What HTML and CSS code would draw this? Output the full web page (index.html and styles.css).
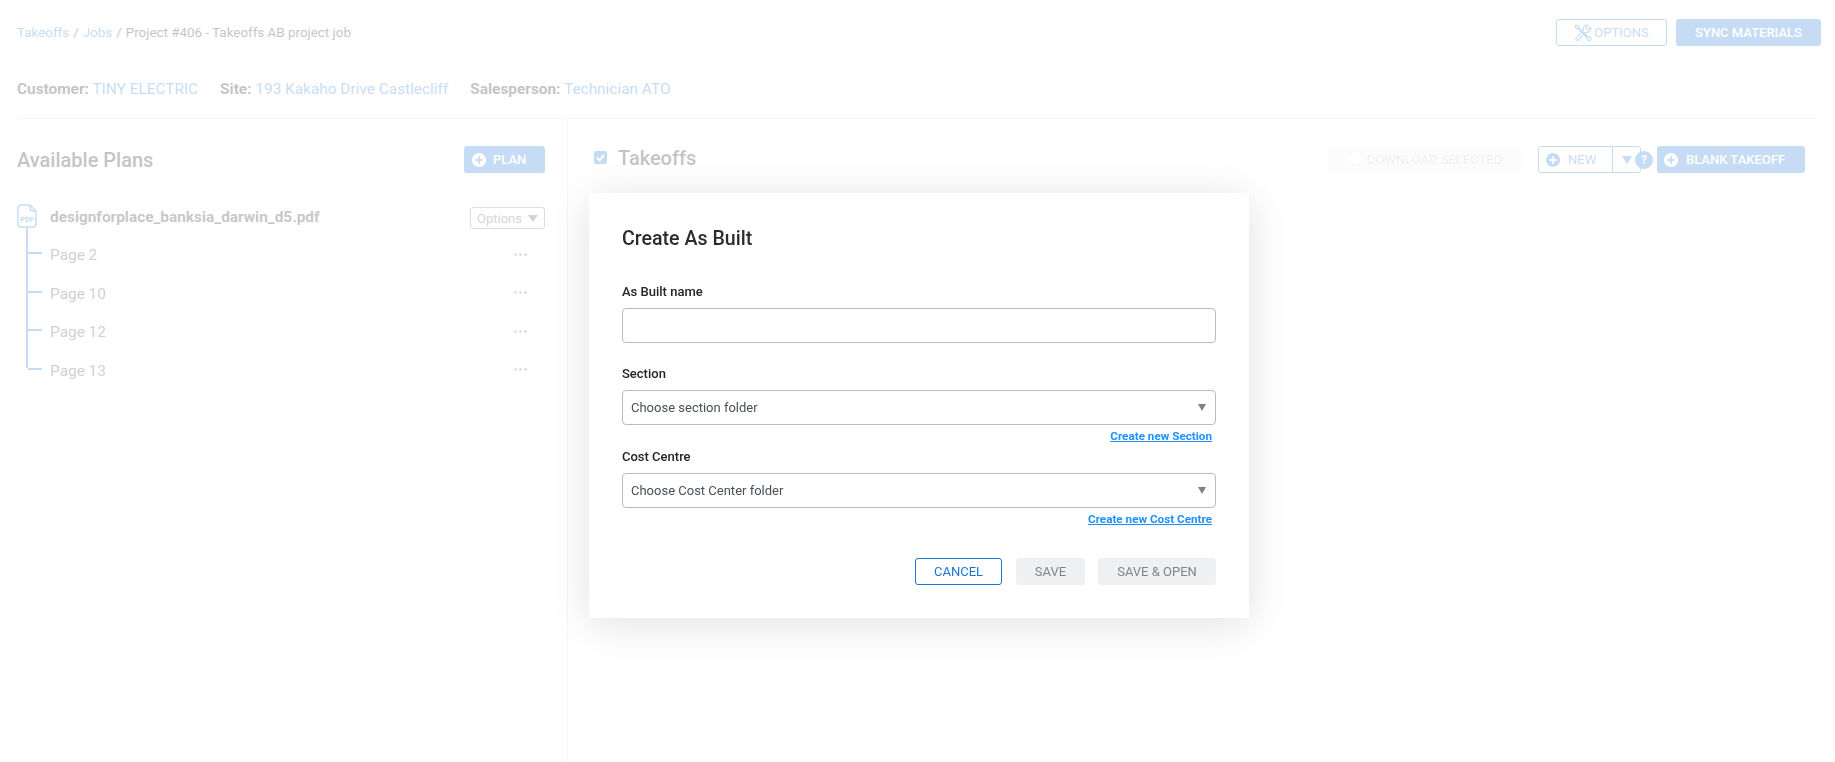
FILE: index.html
```html
<!DOCTYPE html>
<html lang="en">
<head>
<meta charset="utf-8">
<title>Project #406 - Takeoffs AB project job</title>
<link rel="stylesheet" href="styles.css">
</head>
<body>
<div class="page">
  <header class="topbar">
    <nav class="crumbs"><a>Takeoffs</a><span class="sep">/</span><a>Jobs</a><span class="sep">/</span><span>Project #406 - Takeoffs AB project job</span></nav>
    <div class="top-actions">
      <button class="btn btn-outline btn-options">
        <svg class="tools" viewBox="0 0 18 18" width="18" height="18" fill="none" stroke="currentColor" stroke-width="1.1"><path d="M2 1.2 1.2 2l1 2.2 1.6.4 9.4 9.4a1.9 1.9 0 1 0 1-1L4.8 3.6l-.4-1.6z"/><path d="M16.4 3.4l-2.2 2.2-1.8-.4-.4-1.8 2.2-2.2a3.6 3.6 0 0 0-4.6 4.6L7.8 7.6l2.4 2.4 1.8-1.8a3.6 3.6 0 0 0 4.4-4.8z"/><path d="M7 9.2 2 14.2a1.5 1.5 0 0 0 2 2l5-5"/></svg>
        OPTIONS
      </button>
      <button class="btn btn-primary btn-sync">SYNC MATERIALS</button>
    </div>
  </header>
  <div class="meta">
    <span class="meta-item"><b>Customer:</b> <a>TINY ELECTRIC</a></span>
    <span class="meta-item"><b>Site:</b> <a>193 Kakaho Drive Castlecliff</a></span>
    <span class="meta-item"><b>Salesperson:</b> <a>Technician ATO</a></span>
  </div>
  <main class="columns">
    <aside class="plans">
      <div class="plans-head">
        <h2>Available Plans</h2>
        <button class="btn btn-primary btn-plan"><svg class="plus" viewBox="0 0 14 14" width="14" height="14"><circle cx="7" cy="7" r="7" fill="#fff"/><path d="M7 3.5v7M3.5 7h7" stroke="#1976d2" stroke-width="2"/></svg>PLAN</button>
      </div>
      <div class="file-row">
        <svg class="pdf" viewBox="0 0 20 24" width="20" height="24" fill="none"><path d="M4 1h9l6 6v13a3 3 0 0 1-3 3H4a3 3 0 0 1-3-3V4a3 3 0 0 1 3-3z" stroke="#1976d2" stroke-width="1.4"/><path d="M13 1v3a3 3 0 0 0 3 3h3" stroke="#1976d2" stroke-width="1.4"/><text x="10" y="18" text-anchor="middle" class="pdf-text">PDF</text></svg>
        <span class="file-name">designforplace_banksia_darwin_d5.pdf</span>
        <button class="opt-small">Options<i class="caret-small"></i></button>
      </div>
      <ul class="pages">
        <li><span>Page 2</span><i class="dots"></i></li>
        <li><span>Page 10</span><i class="dots"></i></li>
        <li><span>Page 12</span><i class="dots"></i></li>
        <li><span>Page 13</span><i class="dots"></i></li>
      </ul>
    </aside>
    <section class="takeoffs">
      <div class="takeoffs-head">
        <span class="check"><svg viewBox="0 0 14 14" width="13" height="13"><path d="M3 7.2 6 10l5-6" fill="none" stroke="#fff" stroke-width="2"/></svg></span>
        <h2>Takeoffs</h2>
        <div class="takeoffs-actions">
          <button class="btn btn-muted btn-download"><svg viewBox="0 0 14 18" width="14" height="18"><path d="M4 1h6v6h4l-7 7-7-7h4zM0 16h14v2H0z" fill="#fff"/></svg>DOWNLOAD SELECTED</button>
          <div class="split">
            <button class="split-main"><svg viewBox="0 0 14 14" width="14" height="14"><circle cx="7" cy="7" r="7" fill="#1976d2"/><path d="M7 3.5v7M3.5 7h7" stroke="#fff" stroke-width="2"/></svg>NEW</button>
            <button class="split-caret"><i class="caret-blue"></i></button>
            <span class="help">?</span>
          </div>
          <button class="btn btn-primary btn-blank"><svg class="plus" viewBox="0 0 14 14" width="14" height="14"><circle cx="7" cy="7" r="7" fill="#fff"/><path d="M7 3.5v7M3.5 7h7" stroke="#1976d2" stroke-width="2"/></svg>BLANK TAKEOFF</button>
        </div>
      </div>
    </section>
  </main>
</div>
<div class="overlay">
  <div class="modal">
    <h3>Create As Built</h3>
    <div class="field">
      <label>As Built name</label>
      <input class="control" type="text">
    </div>
    <div class="field">
      <label>Section</label>
      <div class="control select">Choose section folder</div>
      <a class="create">Create new Section</a>
    </div>
    <div class="field field-tight">
      <label>Cost Centre</label>
      <div class="control select">Choose Cost Center folder</div>
      <a class="create">Create new Cost Centre</a>
    </div>
    <div class="modal-actions">
      <button class="btn btn-cancel">CANCEL</button>
      <button class="btn btn-grey btn-save">SAVE</button>
      <button class="btn btn-grey btn-saveopen">SAVE &amp; OPEN</button>
    </div>
  </div>
</div>
</body>
</html>
```

FILE: styles.css
```css
* { box-sizing: border-box; }
html, body { margin: 0; height: 100%; }
body { font-family: Roboto, "Liberation Sans", sans-serif; color: #212529; background: #fff; overflow: hidden; }
h2, h3, ul { margin: 0; padding: 0; }
a { color: #1976d2; }
button { font-family: inherit; cursor: pointer; }

.page { height: 762px; display: flex; flex-direction: column; }

.topbar { display: flex; justify-content: space-between; align-items: center; padding: 19px 14px 0 17px; height: 46px; }
.crumbs { font-size: 13.4px; color: #111; }
.sep { margin: 0 4px; }
.top-actions { display: flex; gap: 9px; }

.btn { height: 27px; border-radius: 3px; font-size: 13px; border: 1px solid transparent; padding: 0; display: inline-flex; align-items: center; justify-content: center; }
.btn-primary { background: #1976d2; color: #fff; font-weight: 500; }
.btn-outline { background: #fff; border-color: #1976d2; color: #1976d2; }
.btn-options { width: 111px; gap: 2px; }
.btn-sync { width: 145px; }
.btn-muted { background: #e9ecef; color: #9a9a9a; }

.meta { display: flex; gap: 22px; padding: 34px 17px 0; font-size: 15.4px; line-height: 18px; height: 72px; }
.meta b { font-weight: 700; color: #111; }

.columns { flex: 1; display: flex; margin: 0 14px 0 17px; border-top: 1px solid #ddd; }
.plans { width: 551px; padding: 27px 22px 0 0; border-right: 1px solid #ddd; }
.plans-head { display: flex; justify-content: space-between; align-items: center; height: 27px; }
h2 { font-size: 20px; font-weight: 500; color: #111; }
.btn-plan { width: 81px; gap: 7px; justify-content: flex-start; padding-left: 7px; }

.file-row { display: flex; align-items: flex-start; margin-top: 31px; height: 24px; }
.pdf { flex: none; margin-right: 13px; }
.pdf-text { font: 700 7.5px Roboto, sans-serif; fill: #1976d2; }
.file-name { flex: 1; font-size: 15.4px; line-height: 26px; font-weight: 700; color: #222; }
.opt-small { width: 75px; height: 22px; margin-top: 3px; font-size: 13px; color: #555; background: #fff; border: 1px solid #777; border-radius: 3px; padding: 0; display: inline-flex; align-items: center; justify-content: center; gap: 6px; }
.caret-small { border: 5px solid transparent; border-top: 7px solid #555; border-bottom: 0; }

.pages { list-style: none; margin-left: 9px; border-left: 2px solid #1976d2; height: 140px; padding-top: 8px; position: relative; }
.pages li { display: flex; align-items: center; justify-content: space-between; height: 38.5px; padding: 0 18.5px 0 24px; font-size: 15.4px; color: #444; margin-left: -2px; position: relative; }
.pages li::before { content: ""; position: absolute; left: 2px; top: 16px; width: 14px; height: 2px; background: #1976d2; }
.dots { width: 14px; height: 3px; margin-top: -2px; background: radial-gradient(circle, #888 1.3px, transparent 1.5px) 0 0 / 5px 3px repeat-x; }

.takeoffs { flex: 1; padding: 27px 16px 0 26px; }
.takeoffs-head { display: flex; align-items: center; height: 27px; }
.takeoffs-head h2 { margin-bottom: 3px; }
.check { width: 13px; height: 13px; border-radius: 2px; background: #1976d2; margin: 0 11px 4px 0; display: flex; }
.takeoffs-actions { margin-left: auto; display: flex; align-items: center; }
.btn-download { width: 194px; gap: 5px; margin-right: 16px; opacity: .6; }
.split { display: flex; width: 103px; height: 27px; border: 1px solid #1976d2; border-radius: 3px; background: #fff; position: relative; margin-right: 16px; }
.split button { border: 0; background: transparent; padding: 0; color: #1976d2; font-size: 13px; display: flex; align-items: center; }
.split-main { width: 74px; padding-left: 7px !important; gap: 8px; border-right: 1px solid #1976d2 !important; }
.split-caret { flex: 1; justify-content: center; }
.caret-blue { border: 5px solid transparent; border-top: 8px solid #1976d2; border-bottom: 0; }
.help { position: absolute; right: -13px; top: 4px; width: 18px; height: 18px; border-radius: 50%; background: #1976d2; color: #fff; font-size: 12px; font-weight: 700; display: flex; align-items: center; justify-content: center; }
.btn-blank { width: 148px; gap: 8px; justify-content: flex-start; padding-left: 6px; }

.overlay { position: fixed; inset: 0; background: rgba(255,255,255,.75); padding: 193px 0 0 589px; }
.modal { width: 660px; height: 425px; background: #fff; padding: 33px 33px 0; box-shadow: 0 6px 40px rgba(0,0,0,.12); color: #212529; }
h3 { font-size: 19.6px; font-weight: 500; line-height: 26px; margin-bottom: 31px; color: #2a2d30; }
.field { display: flex; flex-direction: column; margin-bottom: 22px; }
.field-tight { margin-bottom: 0; }
.field label { font-size: 13px; font-weight: 500; line-height: 17px; margin-bottom: 8px; }
.control { height: 35px; border: 1px solid #bbb; border-radius: 4px; width: 100%; background: #fff; font: 13px Roboto, sans-serif; padding: 0 8px; color: #495057; }
.select { display: flex; align-items: center; position: relative; }
.select::after { content: ""; position: absolute; right: 9px; top: 13px; border: 4.5px solid transparent; border-top: 7px solid #808080; border-bottom: 0; }
.create { align-self: flex-end; margin: 5px 4px 0 0; font-size: 11.7px; font-weight: 700; color: #1e90ff; text-decoration: underline; line-height: 13px; }
.field:has(.create) { margin-bottom: 5px; }
.modal-actions { display: flex; justify-content: flex-end; gap: 13px; margin-top: 32px; }
.btn-cancel { width: 87px; margin-right: 1px; background: #fff; border-color: #1976d2; color: #1976d2; }
.btn-grey { background: #eff0f2; color: #808488; }
.btn-save { width: 69px; }
.btn-saveopen { width: 118px; }
```
